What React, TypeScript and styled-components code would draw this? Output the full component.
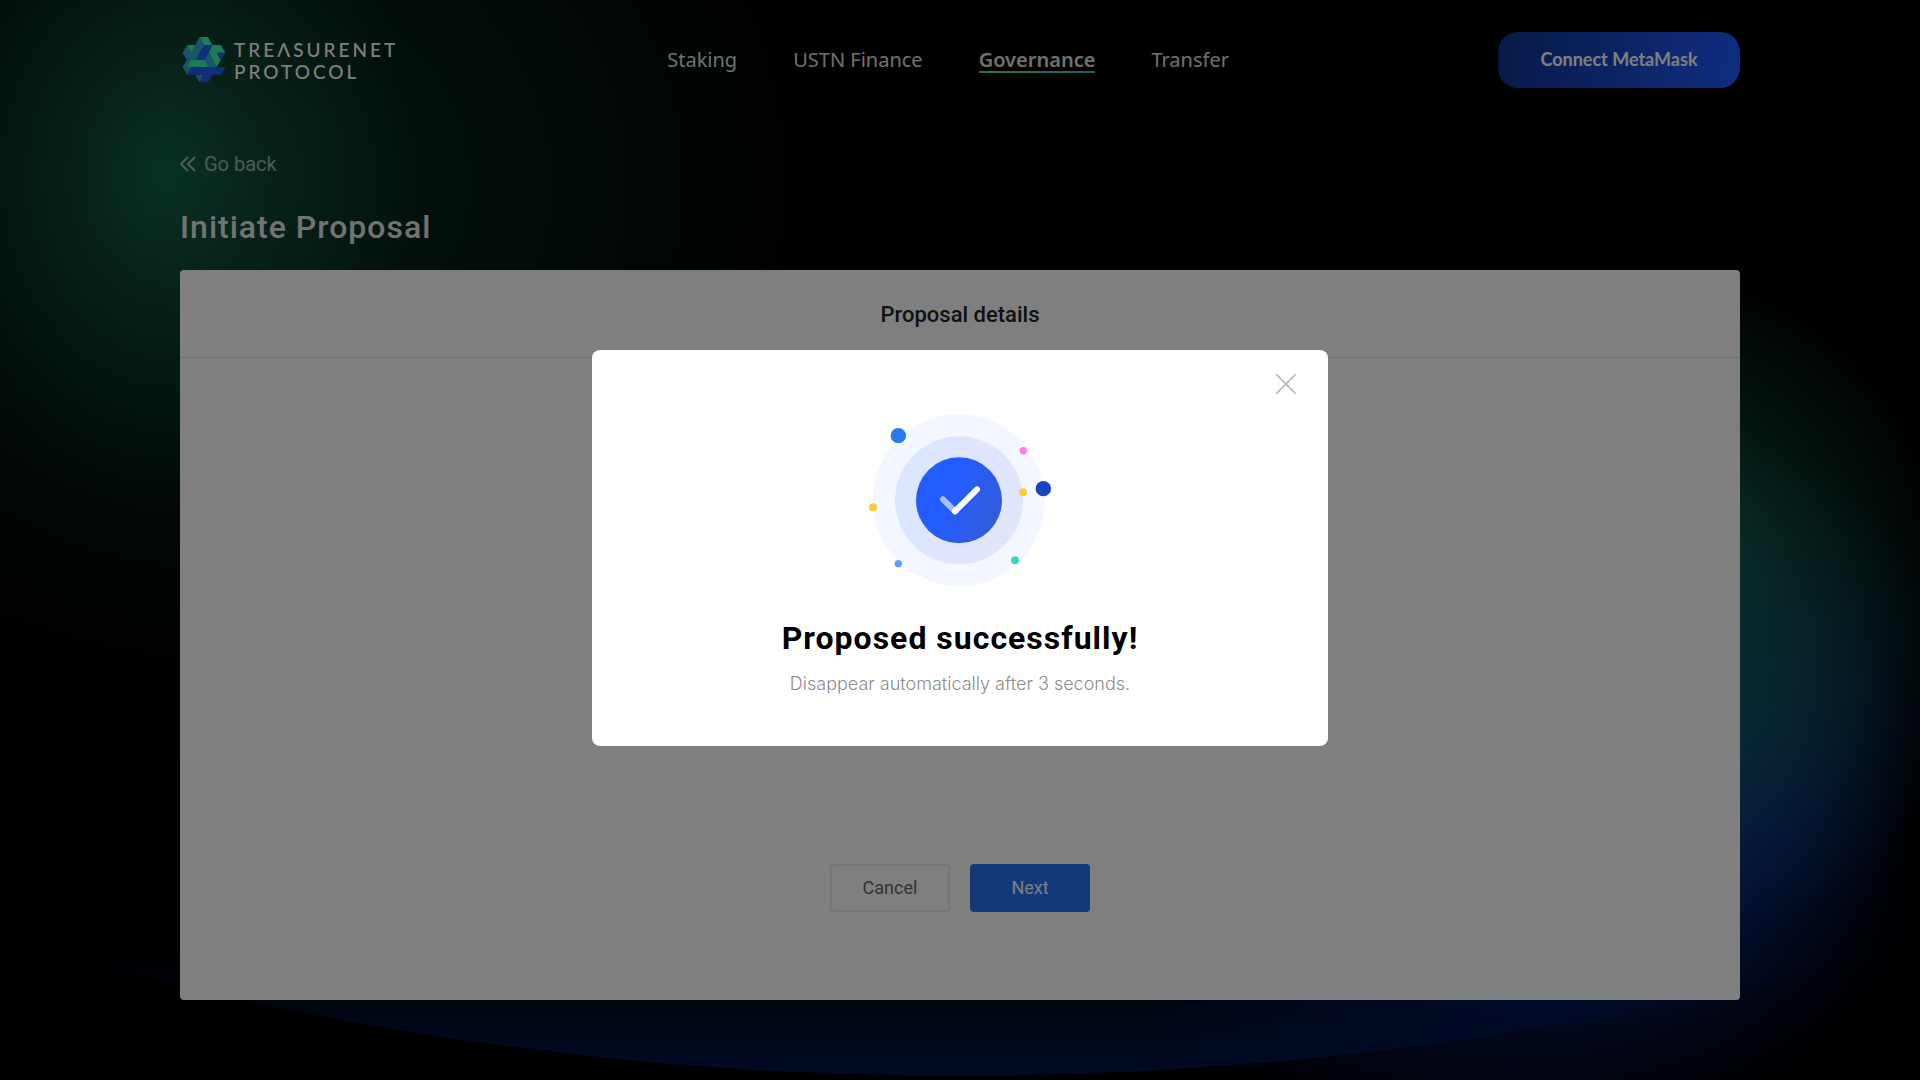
import React, { useState } from "react";
import styled, { createGlobalStyle, css } from "styled-components";

const GlobalStyle = createGlobalStyle`
  *, *::before, *::after { box-sizing: border-box; }
  body {
    margin: 0;
    background: #000;
    font-family: Roboto, "Liberation Sans", sans-serif;
  }
  button { font-family: inherit; cursor: pointer; }
  h1, h2, p { margin: 0; }
`;

const Page = styled.div`
  position: relative;
  isolation: isolate;
  display: flex;
  flex-direction: column;
  min-height: 100vh;
  padding: 0 180px 80px;
  color: #fff;
  background:
    radial-gradient(ellipse 250px 330px at 165px 175px, rgba(24, 108, 84, 0.8), rgba(20, 88, 68, 0.5) 40%, transparent),
    radial-gradient(ellipse 680px 600px at 240px 180px, rgba(12, 62, 46, 0.85), rgba(7, 40, 31, 0.7) 35%, rgba(2, 14, 11, 0.6) 70%, transparent),
    #000;
`;

const SideGlow = styled.div`
  position: absolute;
  z-index: -1;
  inset: 284px 0 0;
  background:
    radial-gradient(ellipse 290px 300px at 1660px 280px, rgba(22, 108, 86, 0.95), rgba(18, 88, 68, 0.6) 45%, transparent),
    radial-gradient(ellipse 310px 260px at 1650px 400px, rgba(20, 90, 160, 0.95), rgba(16, 72, 120, 0.65) 50%, transparent),
    radial-gradient(ellipse 310px 260px at 1610px 490px, rgba(14, 56, 180, 0.95), rgba(12, 48, 140, 0.65) 50%, transparent),
    radial-gradient(ellipse 420px 260px at 1510px 600px, rgba(10, 40, 150, 0.95), rgba(8, 28, 104, 0.6) 50%, transparent);
`;

const Horizon = styled.div`
  position: absolute;
  z-index: -1;
  left: 0;
  right: 0;
  bottom: 4px;
  height: 130px;
  background: linear-gradient(rgba(0, 26, 88, 0), rgba(0, 26, 88, 0.3) 40%, rgba(0, 26, 88, 0.76) 85%);
  clip-path: circle(3450px at 50% calc(100% - 3450px));
`;

const Header = styled.header`
  display: flex;
  align-items: center;
  justify-content: space-between;
  height: 120px;
`;

const Brand = styled.a`
  display: flex;
  align-items: center;
  gap: 6px;
  color: #fff;
  text-decoration: none;
`;

const BrandMark = styled.svg`
  display: block;
  width: 48px;
  height: 52px;
`;

const BrandName = styled.span`
  padding-top: 2px;
  font: 500 19px/22px Lato, sans-serif;
  letter-spacing: 3px;
`;

const Nav = styled.nav`
  display: flex;
  gap: 56px;
`;

const NavLink = styled.a<{ $active?: boolean }>`
  padding-top: 2px;
  font: 400 20px/22px "Noto Sans", sans-serif;
  color: #e0e0e0;
  text-decoration: none;
  border-bottom: 2px solid transparent;
  ${(p) =>
    p.$active &&
    css`
      font-weight: 600;
      border-image: linear-gradient(90deg, #3cf0b4, #32c8c8) 1;
    `}
`;

const ConnectButton = styled.button`
  min-width: 242px;
  height: 56px;
  padding: 0 40px 2px;
  border: 0;
  border-radius: 20px;
  color: #fff;
  font: 700 18px/24px Lato, sans-serif;
  background: linear-gradient(100deg, #0e3490, #225aff);
`;

const BackLink = styled.a`
  display: flex;
  align-items: center;
  align-self: flex-start;
  gap: 8px;
  margin-top: 32px;
  font-size: 20px;
  line-height: 24px;
  color: rgba(255, 255, 255, 0.6);
  text-decoration: none;
`;

const PageTitle = styled.h1`
  margin: 31px 0 23px;
  font-size: 32px;
  font-weight: 500;
  line-height: 40px;
  letter-spacing: 1px;
  color: #e6e6e6;
`;

const Panel = styled.main`
  flex: 1;
  display: flex;
  flex-direction: column;
  border-radius: 4px;
  background: #fff;
`;

const PanelTitle = styled.h2`
  padding: 33px 0 30px;
  border-bottom: 1px solid #e0e0e0;
  font-size: 22px;
  font-weight: 500;
  line-height: 24px;
  text-align: center;
  color: #222;
`;

const Actions = styled.div`
  display: flex;
  justify-content: center;
  gap: 20px;
  margin-top: auto;
  padding: 88px 0;
`;

const ActionButton = styled.button<{ $primary?: boolean }>`
  width: 120px;
  height: 48px;
  padding: 0 0 2px;
  border-radius: 4px;
  font-size: 18px;
  border: ${(p) => (p.$primary ? "0" : "2px solid #ececec")};
  color: ${(p) => (p.$primary ? "#fff" : "#666")};
  background: ${(p) => (p.$primary ? "#2273f4" : "#fff")};
`;

const Overlay = styled.div`
  position: fixed;
  z-index: 10;
  inset: 0;
  display: flex;
  align-items: center;
  justify-content: center;
  padding-top: 16px;
  background: rgba(0, 0, 0, 0.5);
`;

const Dialog = styled.section`
  position: relative;
  display: flex;
  flex-direction: column;
  align-items: center;
  width: 736px;
  padding: 64px 32px 50px;
  border-radius: 8px;
  background: #fff;
`;

const CloseButton = styled.button`
  position: absolute;
  top: 18px;
  right: 26px;
  display: flex;
  align-items: center;
  justify-content: center;
  width: 32px;
  height: 32px;
  padding: 0;
  border: 0;
  background: none;
`;

const DialogTitle = styled.h2`
  margin-top: 32px;
  font-size: 32px;
  font-weight: 700;
  line-height: 40px;
  letter-spacing: 1px;
  color: #000;
`;

const DialogNote = styled.p`
  margin-top: 14px;
  font: 300 18px/24px Inter, sans-serif;
  color: #8c8c8c;
`;

const Logo = () => (
  <BrandMark viewBox="0 0 144 156" aria-hidden="true">
    <g fill="#32a8d2">
      <path d="M58 9L73 34L48 77H20L8 56L22 33L34 56Z" />
      <path d="M86 55L110 99L97 122L74 77Z" />
      <path d="M20 77H32L20 100H34L22 122L8 99Z" />
      <path d="M46 122H71L58 145Z" />
    </g>
    <g fill="#3cf6b4">
      <path d="M58 9H84L97 33L73 34Z" />
      <path d="M22 33H46L34 56Z" />
      <path d="M97 33H122L136 56H110L122 78L110 99L86 55Z" />
      <path d="M32 77H74L86 100H20Z" />
    </g>
    <g fill="#225aff">
      <path d="M73 34H97L74 77H48Z" />
      <path d="M110 56H136L124 78Z" />
      <path d="M34 100H86L97 122L84 145H58L71 122H22Z" />
      <path d="M86 100L110 99H136L124 122H97Z" />
    </g>
  </BrandMark>
);

const SuccessArt = () => (
  <svg width="182" height="172" viewBox="87 71 546 516" aria-hidden="true">
    <defs>
      <linearGradient id="disc" x1="0" y1="0.3" x2="1" y2="0.7">
        <stop offset="0.35" stopColor="#225cff" />
        <stop offset="1" stopColor="#345bd6" />
      </linearGradient>
      <linearGradient id="ring" x1="0" y1="0.3" x2="1" y2="0.7">
        <stop offset="0.2" stopColor="#dde6ff" />
        <stop offset="1" stopColor="#e1e5fa" />
      </linearGradient>
    </defs>
    <circle cx="357" cy="329" r="258" fill="#f4f7ff" />
    <circle cx="357" cy="330" r="192" fill="url(#ring)" />
    <circle cx="357" cy="330" r="129" fill="url(#disc)" />
    <path d="M309 327L345 363" stroke="#a9bdff" strokeWidth="18" strokeLinecap="round" />
    <path d="M345 363L411 297" stroke="#fff" strokeWidth="18" strokeLinecap="round" />
    <circle cx="175" cy="136" r="23" fill="#2878f0" />
    <circle cx="550" cy="181" r="11" fill="#ff7eea" />
    <circle cx="549" cy="306" r="12" fill="#ffca2c" />
    <circle cx="610" cy="295" r="23" fill="#1545c0" />
    <circle cx="99" cy="351" r="12" fill="#ffca2c" />
    <circle cx="175" cy="520" r="11" fill="#5a9fff" />
    <circle cx="525" cy="510" r="12" fill="#34d9c3" />
  </svg>
);

const navItems = ["Staking", "USTN Finance", "Governance", "Transfer"];

export default function App() {
  const [open, setOpen] = useState(true);

  return (
    <>
      <GlobalStyle />
      <Page>
        <SideGlow />
        <Horizon />
        <Header>
          <Brand href="#">
            <Logo />
            <BrandName>
              TREΛSURENET
              <br />
              PROTOCOL
            </BrandName>
          </Brand>
          <Nav>
            {navItems.map((item) => (
              <NavLink key={item} href="#" $active={item === "Governance"}>
                {item}
              </NavLink>
            ))}
          </Nav>
          <ConnectButton type="button">Connect MetaMask</ConnectButton>
        </Header>
        <BackLink href="#">
          <svg width="16" height="16" viewBox="0 0 16 16" fill="none" stroke="currentColor" strokeWidth="2" aria-hidden="true">
            <path d="M8 1L1 8L8 15M15 1L8 8L15 15" />
          </svg>
          Go back
        </BackLink>
        <PageTitle>Initiate Proposal</PageTitle>
        <Panel>
          <PanelTitle>Proposal details</PanelTitle>
          <Actions>
            <ActionButton type="button">Cancel</ActionButton>
            <ActionButton type="button" $primary onClick={() => setOpen(true)}>
              Next
            </ActionButton>
          </Actions>
        </Panel>
      </Page>
      {open && (
        <Overlay>
          <Dialog role="dialog" aria-modal="true" aria-labelledby="dialog-title">
            <CloseButton type="button" aria-label="Close" onClick={() => setOpen(false)}>
              <svg width="22" height="22" viewBox="0 0 22 22" stroke="#c0c0c0" strokeWidth="2" strokeLinecap="round" aria-hidden="true">
                <path d="M2 2L20 20M20 2L2 20" />
              </svg>
            </CloseButton>
            <SuccessArt />
            <DialogTitle id="dialog-title">Proposed successfully!</DialogTitle>
            <DialogNote>Disappear automatically after 3 seconds.</DialogNote>
          </Dialog>
        </Overlay>
      )}
    </>
  );
}
